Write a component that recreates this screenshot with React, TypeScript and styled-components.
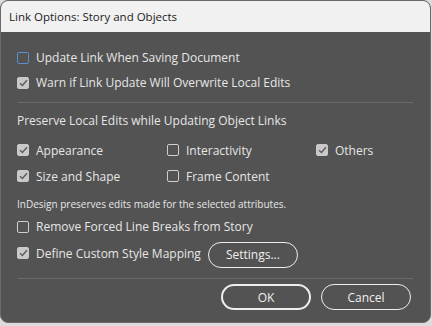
import React from "react";
import styled, { createGlobalStyle } from "styled-components";

const Global = createGlobalStyle`
  html, body { margin: 0; padding: 0; background: #dcdcdc; }
  body { width: 432px; height: 326px; overflow: hidden; }
  * { box-sizing: border-box; }
`;

const Dialog = styled.div`
  width: 431px;
  height: 323px;
  border-radius: 8px;
  overflow: hidden;
  background: #535353;
  display: flex;
  flex-direction: column;
  font-family: "Open Sans", "Noto Sans", sans-serif;
  border: 1px solid #6a6a6a;
`;

const TitleBar = styled.div`
  height: 31px;
  flex: none;
  background: #f1f1f1;
  color: #1b1b1b;
  font-size: 11.5px;
  display: flex;
  align-items: center;
  padding-left: 8px;
`;

const Body = styled.div`
  flex: 1;
  display: flex;
  flex-direction: column;
  padding: 13px 16px 0 16px;
  color: #e6e6e6;
  font-size: 12px;
`;

const Row = styled.div<{ $h?: number }>`
  height: ${(p) => p.$h ?? 25}px;
  flex: none;
  display: flex;
  align-items: center;
`;

const Grid = styled.div`
  display: grid;
  grid-template-columns: 150px 149px 1fr;
  grid-auto-rows: 26px;
`;

const Label = styled.label`
  display: flex;
  align-items: center;
  gap: 7px;
  white-space: nowrap;
  min-height: 25px;
`;

const Box = styled.span<{ $checked?: boolean; $focus?: boolean }>`
  width: 12px;
  height: 12px;
  flex: none;
  border-radius: 2px;
  display: inline-flex;
  align-items: center;
  justify-content: center;
  background: ${(p) => (p.$checked ? "#c9c9c9" : "transparent")};
  border: 1px solid ${(p) => (p.$focus ? "#5a8fcc" : p.$checked ? "#c9c9c9" : "#cfcfcf")};
`;

const Divider = styled.div`
  height: 1px;
  flex: none;
  background: #6b6b6b;
  margin: 0 1px 0 1px;
`;

const Heading = styled.div`
  height: 34px;
  display: flex;
  align-items: center;
`;

const Note = styled.div`
  font-size: 10px;
  height: 25px;
  padding-top: 4px;
  display: flex;
  align-items: center;
`;

const Button = styled.button<{ $primary?: boolean }>`
  width: 90px;
  height: 26px;
  border-radius: 13px;
  background: transparent;
  border: ${(p) => (p.$primary ? "2px" : "1.5px")} solid #eeeeee;
  color: #f0f0f0;
  font-family: "Open Sans", "Noto Sans", sans-serif;
  font-size: 12px;
  padding: 0;
`;

const SettingsButton = styled(Button)`
  margin: 3px 0 0 7px;
`;

const Footer = styled.div`
  display: flex;
  justify-content: flex-end;
  gap: 10px;
  padding: 5px 3px 0 0;
`;

const Check = () => (
  <svg width="9" height="8" viewBox="0 0 9 8">
    <path d="M1 4.2 L3.4 6.5 L8 1.3" fill="none" stroke="#5e5e5e" strokeWidth="1.5" />
  </svg>
);

const CB = ({ label, checked, focus }: { label: string; checked?: boolean; focus?: boolean }) => (
  <Label>
    <Box $checked={checked} $focus={focus}>{checked && <Check />}</Box>
    {label}
  </Label>
);

export default function App() {
  return (
    <>
      <Global />
      <Dialog>
        <TitleBar>Link Options: Story and Objects</TitleBar>
        <Body>
          <CB label="Update Link When Saving Document" focus />
          <CB label="Warn if Link Update Will Overwrite Local Edits" checked />
          <Row $h={7} />
          <Divider />
          <Heading>Preserve Local Edits while Updating Object Links</Heading>
          <Grid>
            <CB label="Appearance" checked />
            <CB label="Interactivity" />
            <CB label="Others" checked />
            <CB label="Size and Shape" checked />
            <CB label="Frame Content" />
          </Grid>
          <Note>InDesign preserves edits made for the selected attributes.</Note>
          <CB label="Remove Forced Line Breaks from Story" />
          <Row $h={28}>
            <CB label="Define Custom Style Mapping" checked />
            <SettingsButton>Settings...</SettingsButton>
          </Row>
          <Row $h={11} />
          <Divider />
          <Footer>
            <Button $primary>OK</Button>
            <Button>Cancel</Button>
          </Footer>
        </Body>
      </Dialog>
    </>
  );
}
